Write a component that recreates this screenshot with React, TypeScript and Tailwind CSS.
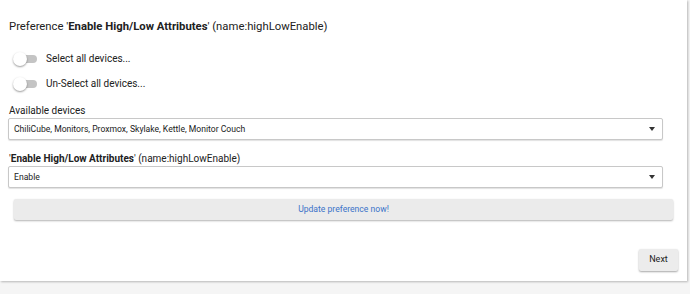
export default function App() {
  return (
    <div className="h-[294px] w-[690px] bg-[#f5f5f5] font-['Roboto',sans-serif] text-[#212121]">
      <div className="relative h-[281px] w-[687px] bg-white shadow-[1px_1px_2px_rgba(0,0,0,0.25)]">
        <div className="pl-[9px] pt-[20px] text-[11.3px] leading-[14px]">
          Preference '<b className="font-bold">Enable High/Low Attributes</b>' (name:highLowEnable)
        </div>

        {/* Toggles */}
        <div className="mt-[17px] flex flex-col gap-[9px] pl-[13px]">
          {['Select all devices...', 'Un-Select all devices...'].map(label => (
            <div key={label} className="flex h-[16px] items-center gap-[9px]">
              <div className="relative h-[16px] w-[24px]">
                <div className="absolute left-[2px] top-[4px] h-[8px] w-[22px] rounded-full bg-[#c4c4c4]"></div>
                <div className="absolute left-0 top-[1px] h-[14px] w-[14px] rounded-full bg-white shadow-[0_1px_2px_rgba(0,0,0,0.4)]"></div>
              </div>
              <span className="text-[10px] leading-[12px]">{label}</span>
            </div>
          ))}
        </div>

        {/* Available devices */}
        <div className="mt-[13px] pl-[9px] text-[10px] leading-[12px]">Available devices</div>
        <div className="ml-[8px] mt-[1px] flex h-[22px] w-[655px] items-center justify-between rounded-[2px] border border-[#c8c8c8] bg-white pl-[5px] pr-[7px] text-[8.6px] shadow-[0_1px_1px_rgba(0,0,0,0.12)]">
          <span>ChiliCube, Monitors, Proxmox, Skylake, Kettle, Monitor Couch</span>
          <span className="h-0 w-0 border-x-[3.5px] border-t-[4px] border-x-transparent border-t-[#333]"></span>
        </div>

        <div className="mt-[13px] pl-[9px] text-[10px] leading-[12px]">
          '<b className="font-bold">Enable High/Low Attributes</b>' (name:highLowEnable)
        </div>
        <div className="ml-[8px] mt-[1px] flex h-[22px] w-[655px] items-center justify-between rounded-[2px] border border-[#c8c8c8] bg-white pl-[5px] pr-[7px] text-[8.6px] shadow-[0_1px_1px_rgba(0,0,0,0.12)]">
          <span>Enable</span>
          <span className="h-0 w-0 border-x-[3.5px] border-t-[4px] border-x-transparent border-t-[#333]"></span>
        </div>

        <div className="ml-[14px] mt-[11px] flex h-[21px] w-[659px] items-center justify-center rounded-[2px] bg-[#ebebeb] text-[8.6px] text-[#3b73c9] shadow-[0_1px_2px_rgba(0,0,0,0.3)]">
          Update preference now!
        </div>

        <div className="mr-[9px] mt-[29px] flex justify-end">
          <div className="flex h-[22px] w-[39px] items-center justify-center rounded-[2px] bg-[#ececec] text-[9px] text-[#222] shadow-[0_1px_2px_rgba(0,0,0,0.35)]">
            Next
          </div>
        </div>
      </div>
    </div>
  );
}
